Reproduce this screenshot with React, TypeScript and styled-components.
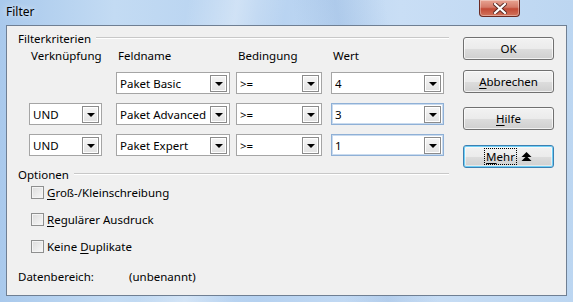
import React from 'react';
import styled, { createGlobalStyle, css } from 'styled-components';

const GlobalStyle = createGlobalStyle`
    html, body {
        margin: 0;
        padding: 0;
        background: #b9d3ee;
    }
    body {
        font-family: "Noto Sans", "Open Sans", sans-serif;
        font-size: 11.5px;
        color: #000;
    }
`;

const Window = styled.div`
    width: 573px;
    height: 302px;
    box-sizing: border-box;
    padding: 0 6px 6px 6px;
    display: flex;
    flex-direction: column;
    background:
        linear-gradient(100deg, rgba(255,255,255,0) 30%, rgba(255,255,255,.35) 38%, rgba(255,255,255,0) 46%),
        linear-gradient(80deg, rgba(255,255,255,0) 55%, rgba(120,160,210,.25) 62%, rgba(255,255,255,0) 70%),
        linear-gradient(to right, #a9c9ec 0%, #c3dbf3 20%, #b5d1f0 45%, #c9def5 70%, #bcd6f1 100%);
`;

const TitleBar = styled.div`
    height: 25px;
    display: flex;
    align-items: flex-start;
    flex-shrink: 0;
`;

const Title = styled.div`
    padding-top: 3px;
    font-size: 12px;
    text-shadow: 0 0 6px rgba(255,255,255,.9);
`;

const CloseButton = styled.div`
    margin-left: auto;
    margin-right: 47px;
    width: 41px;
    height: 17px;
    box-sizing: border-box;
    border: 1px solid #6b2a22;
    border-top: none;
    border-radius: 0 0 4px 4px;
    background: linear-gradient(to bottom, #e8a493 0%, #d47a68 45%, #c24a36 55%, #d2745c 100%);
    box-shadow: inset 0 0 0 1px rgba(255,255,255,.35);
    display: flex;
    align-items: center;
    justify-content: center;
`;

const Client = styled.div`
    flex: 1;
    display: flex;
    background: #f0f0f0;
    border: 1px solid #6f7f93;
`;

const LeftColumn = styled.div`
    width: 431px;
    padding-left: 11px;
    display: flex;
    flex-direction: column;
`;

const RightColumn = styled.div`
    margin-left: auto;
    padding: 11px 12px 0 0;
    display: flex;
    flex-direction: column;
`;

const GroupHeader = styled.div<{ $top: number }>`
    display: flex;
    align-items: center;
    height: 16px;
    margin-top: ${p => p.$top}px;
    &::after {
        content: '';
        flex: 1;
        height: 1px;
        margin-left: 5px;
        background: #c8c8c8;
        border-bottom: 1px solid #fff;
    }
`;

const CriteriaGrid = styled.div`
    margin-left: 11px;
    margin-top: 2px;
    display: grid;
    grid-template-columns: 87px 120px 95px 113px;
    grid-auto-rows: auto;
    row-gap: 9px;
`;

const ColumnHead = styled.div`
    height: 16px;
    line-height: 16px;
    padding-left: 2px;
    margin-bottom: -1px;
`;

const ComboBox = styled.div<{ $width: number; $focus?: boolean }>`
    width: ${p => p.$width}px;
    height: 22px;
    box-sizing: border-box;
    border: 1px solid #a5a5a5;
    background: #fff;
    display: flex;
    align-items: center;
    padding: 1px 2px 1px 3px;
    ${p => p.$focus && css`
        border-color: #8fb0d6;
        box-shadow: inset 0 0 0 1px #c9dbef;
    `}
`;

const ComboText = styled.span`
    flex: 1;
    white-space: nowrap;
    overflow: hidden;
`;

const ArrowButton = styled.div`
    width: 17px;
    height: 17px;
    box-sizing: border-box;
    border: 1px solid #8b8b8b;
    background: linear-gradient(to bottom, #f6f6f6, #e2e2e2);
    box-shadow: inset 0 0 0 1px #fff;
    display: flex;
    align-items: center;
    justify-content: center;
    &::before {
        content: '';
        border-left: 4px solid transparent;
        border-right: 4px solid transparent;
        border-top: 4px solid #000;
        margin-top: 1px;
    }
`;

const Empty = styled.div``;

const OptionList = styled.div`
    margin-top: 1px;
    padding-left: 13px;
    display: flex;
    flex-direction: column;
    gap: 9px;
`;

const CheckRow = styled.label`
    display: flex;
    align-items: center;
    height: 18px;
    gap: 3px;
`;

const CheckBox = styled.span`
    width: 13px;
    height: 13px;
    box-sizing: border-box;
    border: 1px solid #8e8f8f;
    background: linear-gradient(135deg, #dcdcdc, #f8f8f8);
    box-shadow: inset 0 0 0 1px #f4f4f4;
`;

const InfoRow = styled.div`
    margin-top: 13px;
    height: 16px;
    display: grid;
    grid-template-columns: 111px auto;
    align-items: center;
`;

const PushButton = styled.div<{ $gap: number; $default?: boolean }>`
    width: 91px;
    height: 23px;
    box-sizing: border-box;
    margin-top: ${p => p.$gap}px;
    border: 1px solid #707070;
    border-radius: 3px;
    background: linear-gradient(to bottom, #f2f2f2 0%, #ebebeb 50%, #dddddd 51%, #cfcfcf 100%);
    box-shadow: inset 0 0 0 1px rgba(255,255,255,.7);
    display: flex;
    align-items: center;
    justify-content: center;
    gap: 5px;
    ${p => p.$default && css`
        border-color: #3c7fb1;
        box-shadow: inset 0 0 0 1px #6fd0f7, inset 0 0 0 2px rgba(255,255,255,.5);
    `}
`;

const FocusLabel = styled.span`
    outline: 1px dotted #000;
    outline-offset: 0;
    line-height: 15px;
    padding: 0 1px;
`;

const U = styled.span`
    text-decoration: underline;
    text-underline-offset: 2px;
`;

type Row = { link?: string; field: string; cond: string; value: string; focus?: boolean };

const rows: Row[] = [
    { field: 'Paket Basic', cond: '>=', value: '4' },
    { link: 'UND', field: 'Paket Advanced', cond: '>=', value: '3', focus: true },
    { link: 'UND', field: 'Paket Expert', cond: '>=', value: '1', focus: true },
];

const Combo: React.FC<{ width: number; text: string; focus?: boolean }> = ({ width, text, focus }) => (
    <ComboBox $width={width} $focus={focus}>
        <ComboText>{text}</ComboText>
        <ArrowButton />
    </ComboBox>
);

const CloseGlyph = () => (
    <svg width="14" height="11" viewBox="0 0 14 11">
        <path d="M2 1 L12 10 M12 1 L2 10" stroke="#5a2a24" strokeWidth="4" strokeLinecap="square" />
        <path d="M2 1 L12 10 M12 1 L2 10" stroke="#fff" strokeWidth="2.2" strokeLinecap="square" />
    </svg>
);

const DoubleUp = () => (
    <svg width="11" height="10" viewBox="0 0 11 10">
        <path d="M5.5 0 L10.5 5 L0.5 5 Z" fill="#000" />
        <path d="M5.5 4 L10.5 9 L0.5 9 Z" fill="#000" />
    </svg>
);

const App: React.FC = () => {
    return (
        <Window>
            <GlobalStyle />
            <TitleBar>
                <Title>Filter</Title>
                <CloseButton>
                    <CloseGlyph />
                </CloseButton>
            </TitleBar>
            <Client>
                <LeftColumn>
                    <GroupHeader $top={4}>Filterkriterien</GroupHeader>
                    <CriteriaGrid>
                        <ColumnHead>Verknüpfung</ColumnHead>
                        <ColumnHead>Feldname</ColumnHead>
                        <ColumnHead>Bedingung</ColumnHead>
                        <ColumnHead>Wert</ColumnHead>
                        {rows.map((r, i) => (
                            <React.Fragment key={i}>
                                {r.link ? <Combo width={73} text={r.link} /> : <Empty />}
                                <Combo width={114} text={r.field} />
                                <Combo width={86} text={r.cond} />
                                <Combo width={113} text={r.value} focus={r.focus} />
                            </React.Fragment>
                        ))}
                    </CriteriaGrid>
                    <GroupHeader $top={10}>Optionen</GroupHeader>
                    <OptionList>
                        <CheckRow><CheckBox /><span><U>G</U>roß-/Kleinschreibung</span></CheckRow>
                        <CheckRow><CheckBox /><span><U>R</U>egulärer Ausdruck</span></CheckRow>
                        <CheckRow><CheckBox /><span>Keine <U>D</U>uplikate</span></CheckRow>
                    </OptionList>
                    <InfoRow>
                        <span>Datenbereich:</span>
                        <span>(unbenannt)</span>
                    </InfoRow>
                </LeftColumn>
                <RightColumn>
                    <PushButton $gap={0}>OK</PushButton>
                    <PushButton $gap={10}><span><U>A</U>bbrechen</span></PushButton>
                    <PushButton $gap={14}><span><U>H</U>ilfe</span></PushButton>
                    <PushButton $gap={15} $default>
                        <FocusLabel><U>M</U>ehr</FocusLabel>
                        <DoubleUp />
                    </PushButton>
                </RightColumn>
            </Client>
        </Window>
    );
};

export default App;
